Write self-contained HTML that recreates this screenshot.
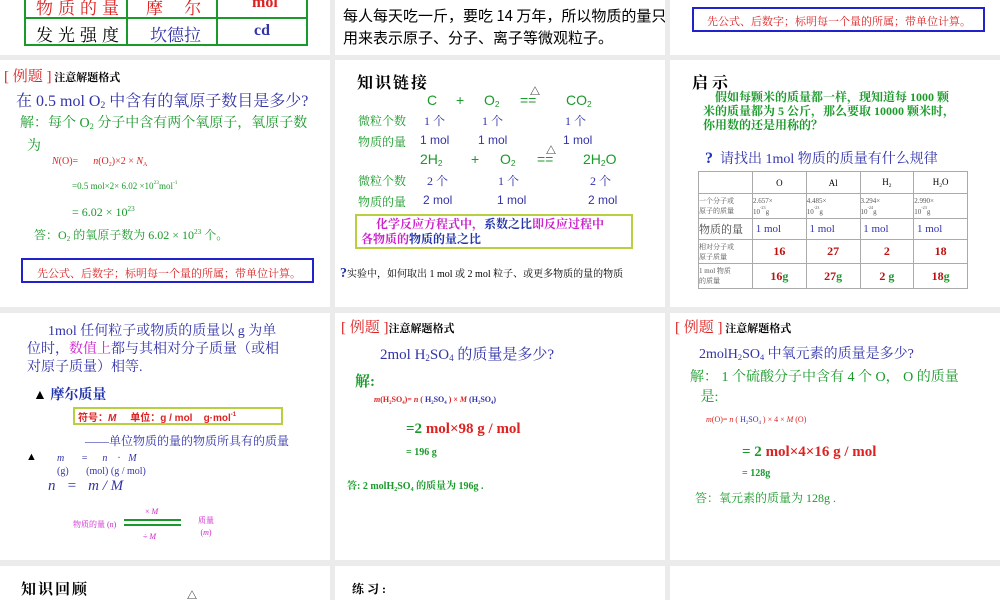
<!DOCTYPE html>
<html><head><meta charset="utf-8"><style>
*{margin:0;padding:0;box-sizing:border-box}
body{width:1000px;height:600px;background:#ebebeb;position:relative;overflow:hidden;font-family:"Liberation Serif","Noto Serif CJK SC",serif}
.s{position:absolute;background:#fff;overflow:hidden}
.a{position:absolute;white-space:nowrap}
.g{color:#1a9a2a}.b{color:#3333aa}.r{color:#dd2222}.m{color:#cc22cc}
.sans{font-family:"Liberation Sans","Noto Sans CJK SC",sans-serif}
sub{font-size:60%;vertical-align:-2px}
sup{font-size:60%;vertical-align:5px}
table{border-collapse:collapse}
</style></head><body>
<!-- row 1 -->
<div class="s" style="left:0;top:0;width:330px;height:55px">
 <div class="a" style="left:24px;top:-10px;width:284px;height:56px;border:2px solid #1a9a2a"></div>
 <div class="a" style="left:126px;top:-10px;width:2px;height:56px;background:#1a9a2a"></div>
 <div class="a" style="left:216px;top:-10px;width:2px;height:56px;background:#1a9a2a"></div>
 <div class="a" style="left:24px;top:17px;width:284px;height:2px;background:#1a9a2a"></div>
 <div class="a r" style="left:36px;top:-6px;font-size:17px;letter-spacing:5px">物质的量</div>
 <div class="a r" style="left:146px;top:-6px;font-size:17px">摩&nbsp;&nbsp;&nbsp;&nbsp;&nbsp;尔</div>
 <div class="a r" style="left:252px;top:-6px;font-size:16px;font-weight:bold">mol</div>
 <div class="a" style="left:36px;top:21px;font-size:17px;letter-spacing:5px">发光强度</div>
 <div class="a b" style="left:150px;top:21px;font-size:17px">坎德拉</div>
 <div class="a b" style="left:254px;top:22px;font-size:16px;font-weight:bold">cd</div>
</div>
<div class="s" style="left:335px;top:0;width:330px;height:55px">
 <div class="a" style="left:8px;top:5px;font-size:15px;line-height:22px;font-family:'Noto Sans CJK SC',sans-serif">每人每天吃一斤，要吃 14 万年，所以物质的量只<br>用来表示原子、分子、离子等微观粒子。</div>
</div>
<div class="s" style="left:670px;top:0;width:330px;height:55px">
 <div class="a" style="left:22px;top:7px;width:293px;height:25px;border:2px solid #2222cc"></div>
 <div class="a r" style="left:37px;top:13px;font-size:11px">先公式、后数字；标明每一个量的所属；带单位计算。</div>
</div>
<!-- row 2 -->
<div class="s" style="left:0;top:60px;width:330px;height:247px">
 <div class="a" style="left:4px;top:5px;font-size:15px"><span class="r">[ 例题 ]</span><span style="font-size:11px;font-weight:bold"> 注意解题格式</span></div>
 <div class="a b" style="left:16px;top:28px;font-size:16px">在 0.5 mol O<sub>2</sub> 中含有的氧原子数目是多少?</div>
 <div class="a g" style="left:20px;top:54px;font-size:14px;line-height:20px">解：每个 O<sub>2</sub> 分子中含有两个氧原子，氧原子数<br>&nbsp;&nbsp;为</div>
 <div class="a r" style="left:52px;top:96px;font-size:10px"><i>N</i>(O)=&nbsp;&nbsp;&nbsp;&nbsp;&nbsp;&nbsp;<i>n</i>(O<sub>2</sub>)×2 × <i>N</i><sub>A</sub></div>
 <div class="a g" style="left:72px;top:120px;font-size:9px">=0.5 mol×2× 6.02 ×10<sup>23</sup>mol<sup>-1</sup></div>
 <div class="a g" style="left:72px;top:145px;font-size:12px">= 6.02 × 10<sup>23</sup></div>
 <div class="a g" style="left:34px;top:166px;font-size:12px">答：O<sub>2</sub> 的氧原子数为 6.02 × 10<sup>23</sup> 个。</div>
 <div class="a" style="left:21px;top:198px;width:293px;height:25px;border:2px solid #2222cc"></div>
 <div class="a r" style="left:37px;top:205px;font-size:11px">先公式、后数字；标明每一个量的所属；带单位计算。</div>
</div>
<div class="s" style="left:335px;top:60px;width:330px;height:247px">
 <div class="a" style="left:22px;top:10px;font-size:16px;font-weight:bold;letter-spacing:2px">知识链接</div>
 <div class="a g sans" style="left:92px;top:32px;font-size:14px">C</div>
 <div class="a g sans" style="left:121px;top:32px;font-size:14px">+</div>
 <div class="a g sans" style="left:149px;top:32px;font-size:14px">O<sub>2</sub></div>
 <div class="a g sans" style="left:185px;top:32px;font-size:14px">==</div>
 <div class="a g sans" style="left:231px;top:32px;font-size:14px">CO<sub>2</sub></div>
 <div class="a" style="left:195px;top:23px;font-size:10px">△</div>
 <div class="a g" style="left:23px;top:52px;font-size:12px">微粒个数</div>
 <div class="a b" style="left:89px;top:52px;font-size:12px">1 个</div><div class="a b" style="left:147px;top:52px;font-size:12px">1 个</div><div class="a b" style="left:230px;top:52px;font-size:12px">1 个</div>
 <div class="a g" style="left:23px;top:73px;font-size:12px">物质的量</div>
 <div class="a b sans" style="left:85px;top:73px;font-size:12px">1 mol</div><div class="a b sans" style="left:143px;top:73px;font-size:12px">1 mol</div><div class="a b sans" style="left:228px;top:73px;font-size:12px">1 mol</div>
 <div class="a g sans" style="left:85px;top:91px;font-size:14px">2H<sub>2</sub></div>
 <div class="a g sans" style="left:136px;top:91px;font-size:14px">+</div>
 <div class="a g sans" style="left:165px;top:91px;font-size:14px">O<sub>2</sub></div>
 <div class="a g sans" style="left:202px;top:91px;font-size:14px">==</div>
 <div class="a g sans" style="left:248px;top:91px;font-size:14px">2H<sub>2</sub>O</div>
 <div class="a" style="left:211px;top:82px;font-size:10px">△</div>
 <div class="a g" style="left:23px;top:112px;font-size:12px">微粒个数</div>
 <div class="a b" style="left:92px;top:112px;font-size:12px">2 个</div><div class="a b" style="left:163px;top:112px;font-size:12px">1 个</div><div class="a b" style="left:255px;top:112px;font-size:12px">2 个</div>
 <div class="a g" style="left:23px;top:133px;font-size:12px">物质的量</div>
 <div class="a b sans" style="left:88px;top:133px;font-size:12px">2 mol</div><div class="a b sans" style="left:162px;top:133px;font-size:12px">1 mol</div><div class="a b sans" style="left:253px;top:133px;font-size:12px">2 mol</div>
 <div class="a" style="left:20px;top:154px;width:278px;height:35px;border:2px solid #b8d040"></div>
 <div class="a" style="left:26px;top:157px;font-size:12px;font-weight:bold;line-height:15px"><span class="m">&nbsp;&nbsp;&nbsp;&nbsp;&nbsp;化学反应方程式中，</span><span style="color:#2233aa">系数之比</span><span class="m">即反应过程中</span><br><span class="m">各物质的</span><span style="color:#2233aa">物质的量之比</span></div>
 <div class="a" style="left:5px;top:205px;font-size:10px"><b style="color:#2233aa;font-size:14px">?</b>实验中，如何取出 1 mol 或 2 mol 粒子、或更多物质的量的物质</div>
</div>
<div class="s" style="left:670px;top:60px;width:330px;height:247px">
 <div class="a" style="left:22px;top:10px;font-size:16px;font-weight:bold;letter-spacing:4px">启示</div>
 <div class="a g" style="left:33px;top:30px;font-size:12px;line-height:14px;font-weight:bold">&nbsp;&nbsp;&nbsp;&nbsp;假如每颗米的质量都一样，现知道每 1000 颗<br>米的质量都为 5 公斤，那么要取 10000 颗米时，<br>你用数的还是用称的？</div>
 <div class="a b" style="left:35px;top:88px;font-size:14px"><b style="color:#2233bb;font-size:16px">?</b>&nbsp;&nbsp;请找出 1mol 物质的质量有什么规律</div>
 <table class="a" style="left:28px;top:111px;width:270px;font-size:9px;border:1px solid #888">
  <tr style="height:22px"><td style="border:1px solid #aaa;width:54px"></td><td style="border:1px solid #aaa;text-align:center">O</td><td style="border:1px solid #aaa;text-align:center">Al</td><td style="border:1px solid #aaa;text-align:center">H<sub>2</sub></td><td style="border:1px solid #aaa;text-align:center">H<sub>2</sub>O</td></tr>
  <tr style="height:25px;font-size:7px;color:#555"><td style="border:1px solid #aaa">一个分子或<br>原子的质量</td><td style="border:1px solid #aaa">2.657×<br>10<sup>-23</sup>g</td><td style="border:1px solid #aaa">4.485×<br>10<sup>-23</sup>g</td><td style="border:1px solid #aaa">3.294×<br>10<sup>-24</sup>g</td><td style="border:1px solid #aaa">2.990×<br>10<sup>-23</sup>g</td></tr>
  <tr style="height:21px;font-size:11px"><td style="border:1px solid #aaa;color:#444">物质的量</td><td class="b" style="border:1px solid #aaa">&nbsp;1 mol</td><td class="b" style="border:1px solid #aaa">&nbsp;1 mol</td><td class="b" style="border:1px solid #aaa">&nbsp;1 mol</td><td class="b" style="border:1px solid #aaa">&nbsp;1 mol</td></tr>
  <tr style="height:24px;font-size:12px;font-weight:bold;color:#bb1111;text-align:center"><td style="border:1px solid #aaa;font-size:7px;font-weight:normal;color:#555;text-align:left">相对分子或<br>原子质量</td><td style="border:1px solid #aaa">16</td><td style="border:1px solid #aaa">27</td><td style="border:1px solid #aaa">2</td><td style="border:1px solid #aaa">18</td></tr>
  <tr style="height:25px;font-size:12px;font-weight:bold;color:#bb1111;text-align:center"><td style="border:1px solid #aaa;font-size:7px;font-weight:normal;color:#555;text-align:left">1 mol 物质<br>的质量</td><td style="border:1px solid #aaa">16<span class="g">g</span></td><td style="border:1px solid #aaa">27<span class="g">g</span></td><td style="border:1px solid #aaa">2 <span class="g">g</span></td><td style="border:1px solid #aaa">18<span class="g">g</span></td></tr>
 </table>
</div>
<!-- row 3 -->
<div class="s" style="left:0;top:313px;width:330px;height:247px">
 <div class="a b" style="left:27px;top:10px;font-size:14px;line-height:18px">&nbsp;&nbsp;&nbsp;&nbsp;&nbsp;&nbsp;1mol 任何粒子或物质的质量以 g 为单<br>位时，<span class="m">数值上</span>都与其相对分子质量（或相<br>对原子质量）相等.</div>
 <div class="a" style="left:33px;top:71px;font-size:14px;font-weight:bold;color:#2233aa"><span style="color:#000">▲</span> 摩尔质量</div>
 <div class="a" style="left:73px;top:94px;width:210px;height:18px;border:2px solid #b8d040"></div>
 <div class="a r sans" style="left:78px;top:96px;font-size:10px;font-weight:bold">符号：<i>M</i>&nbsp;&nbsp;&nbsp;&nbsp;&nbsp;单位：g / mol&nbsp;&nbsp;&nbsp;&nbsp;g·mol<sup>-1</sup></div>
 <div class="a b" style="left:85px;top:119px;font-size:12px">——单位物质的量的物质所具有的质量</div>
 <div class="a" style="left:26px;top:138px;font-size:11px">▲</div>
 <div class="a b" style="left:57px;top:139px;font-size:10px;line-height:13px"><i>m</i>&nbsp;&nbsp;&nbsp;&nbsp;&nbsp;&nbsp;&nbsp;=&nbsp;&nbsp;&nbsp;&nbsp;&nbsp;&nbsp;<i>n</i>&nbsp;&nbsp;&nbsp;&nbsp;·&nbsp;&nbsp;&nbsp;<i>M</i><br>(g)&nbsp;&nbsp;&nbsp;&nbsp;&nbsp;&nbsp;&nbsp;(mol) (g / mol)</div>
 <div class="a b" style="left:48px;top:165px;font-size:15px;font-style:italic">n&nbsp;&nbsp;&nbsp;=&nbsp;&nbsp;&nbsp;m / M</div>
 <div class="a m" style="left:145px;top:194px;font-size:8px">× <i>M</i></div>
 <div class="a m" style="left:73px;top:206px;font-size:8px">物质的量 (<i>n</i>)</div>
 <div class="a" style="left:124px;top:206px;width:57px;height:2px;background:#1a9a2a"></div>
 <div class="a" style="left:124px;top:211px;width:57px;height:2px;background:#1a9a2a"></div>
 <div class="a m" style="left:143px;top:219px;font-size:8px">÷ <i>M</i></div>
 <div class="a m" style="left:198px;top:202px;font-size:8px;line-height:12px;text-align:center">质量<br>(<i>m</i>)</div>
</div>
<div class="s" style="left:335px;top:313px;width:330px;height:247px">
 <div class="a" style="left:6px;top:3px;font-size:15px"><span class="r">[ 例题 ]</span><span style="font-size:11px;font-weight:bold">注意解题格式</span></div>
 <div class="a b" style="left:45px;top:30px;font-size:15px">2mol H<sub>2</sub>SO<sub>4</sub> 的质量是多少?</div>
 <div class="a g" style="left:20px;top:57px;font-size:15px;font-weight:bold">解:</div>
 <div class="a r" style="left:39px;top:82px;font-size:8px;font-weight:bold"><i>m</i>(H<sub>2</sub>SO<sub>4</sub>)= <i>n</i> ( <span class="b">H<sub>2</sub>SO<sub>4</sub></span> ) × <i>M</i> <span class="b">(H<sub>2</sub>SO<sub>4</sub>)</span></div>
 <div class="a" style="left:71px;top:108px;font-size:15px;font-weight:bold"><span class="g">=2</span> <span class="r">mol×98 g / mol</span></div>
 <div class="a g" style="left:71px;top:134px;font-size:10px;font-weight:bold">= 196 g</div>
 <div class="a g" style="left:12px;top:164px;font-size:10px;font-weight:bold">答:  2 molH<sub>2</sub>SO<sub>4</sub> 的质量为 196g .</div>
</div>
<div class="s" style="left:670px;top:313px;width:330px;height:247px">
 <div class="a" style="left:5px;top:3px;font-size:15px"><span class="r">[ 例题 ]</span><span style="font-size:11px;font-weight:bold"> 注意解题格式</span></div>
 <div class="a b" style="left:29px;top:30px;font-size:14px">2molH<sub>2</sub>SO<sub>4</sub> 中氧元素的质量是多少?</div>
 <div class="a g" style="left:20px;top:55px;font-size:14px;line-height:20px">解： 1 个硫酸分子中含有 4 个 O， O 的质量<br>&nbsp;&nbsp;&nbsp;是:</div>
 <div class="a r" style="left:36px;top:102px;font-size:8px"><i>m</i>(O)= <i>n</i> ( <span class="b">H<sub>2</sub>SO<sub>4</sub></span> ) × 4 × <i>M</i> (O)</div>
 <div class="a" style="left:72px;top:131px;font-size:15px;font-weight:bold"><span class="g">= 2</span> <span class="r">mol×4×16 g / mol</span></div>
 <div class="a g" style="left:72px;top:155px;font-size:10px;font-weight:bold">= 128g</div>
 <div class="a g" style="left:25px;top:176px;font-size:12px">答：氧元素的质量为 128g .</div>
</div>
<!-- row 4 -->
<div class="s" style="left:0;top:566px;width:330px;height:34px">
 <div class="a" style="left:21px;top:12px;font-size:15px;font-weight:bold;letter-spacing:2px">知识回顾</div>
 <div class="a" style="left:187px;top:21px;font-size:10px">△</div>
</div>
<div class="s" style="left:335px;top:566px;width:330px;height:34px">
 <div class="a" style="left:17px;top:14px;font-size:12px;font-weight:bold">练 习 :</div>
</div>
<div class="s" style="left:670px;top:566px;width:330px;height:34px"></div>
</body></html>
